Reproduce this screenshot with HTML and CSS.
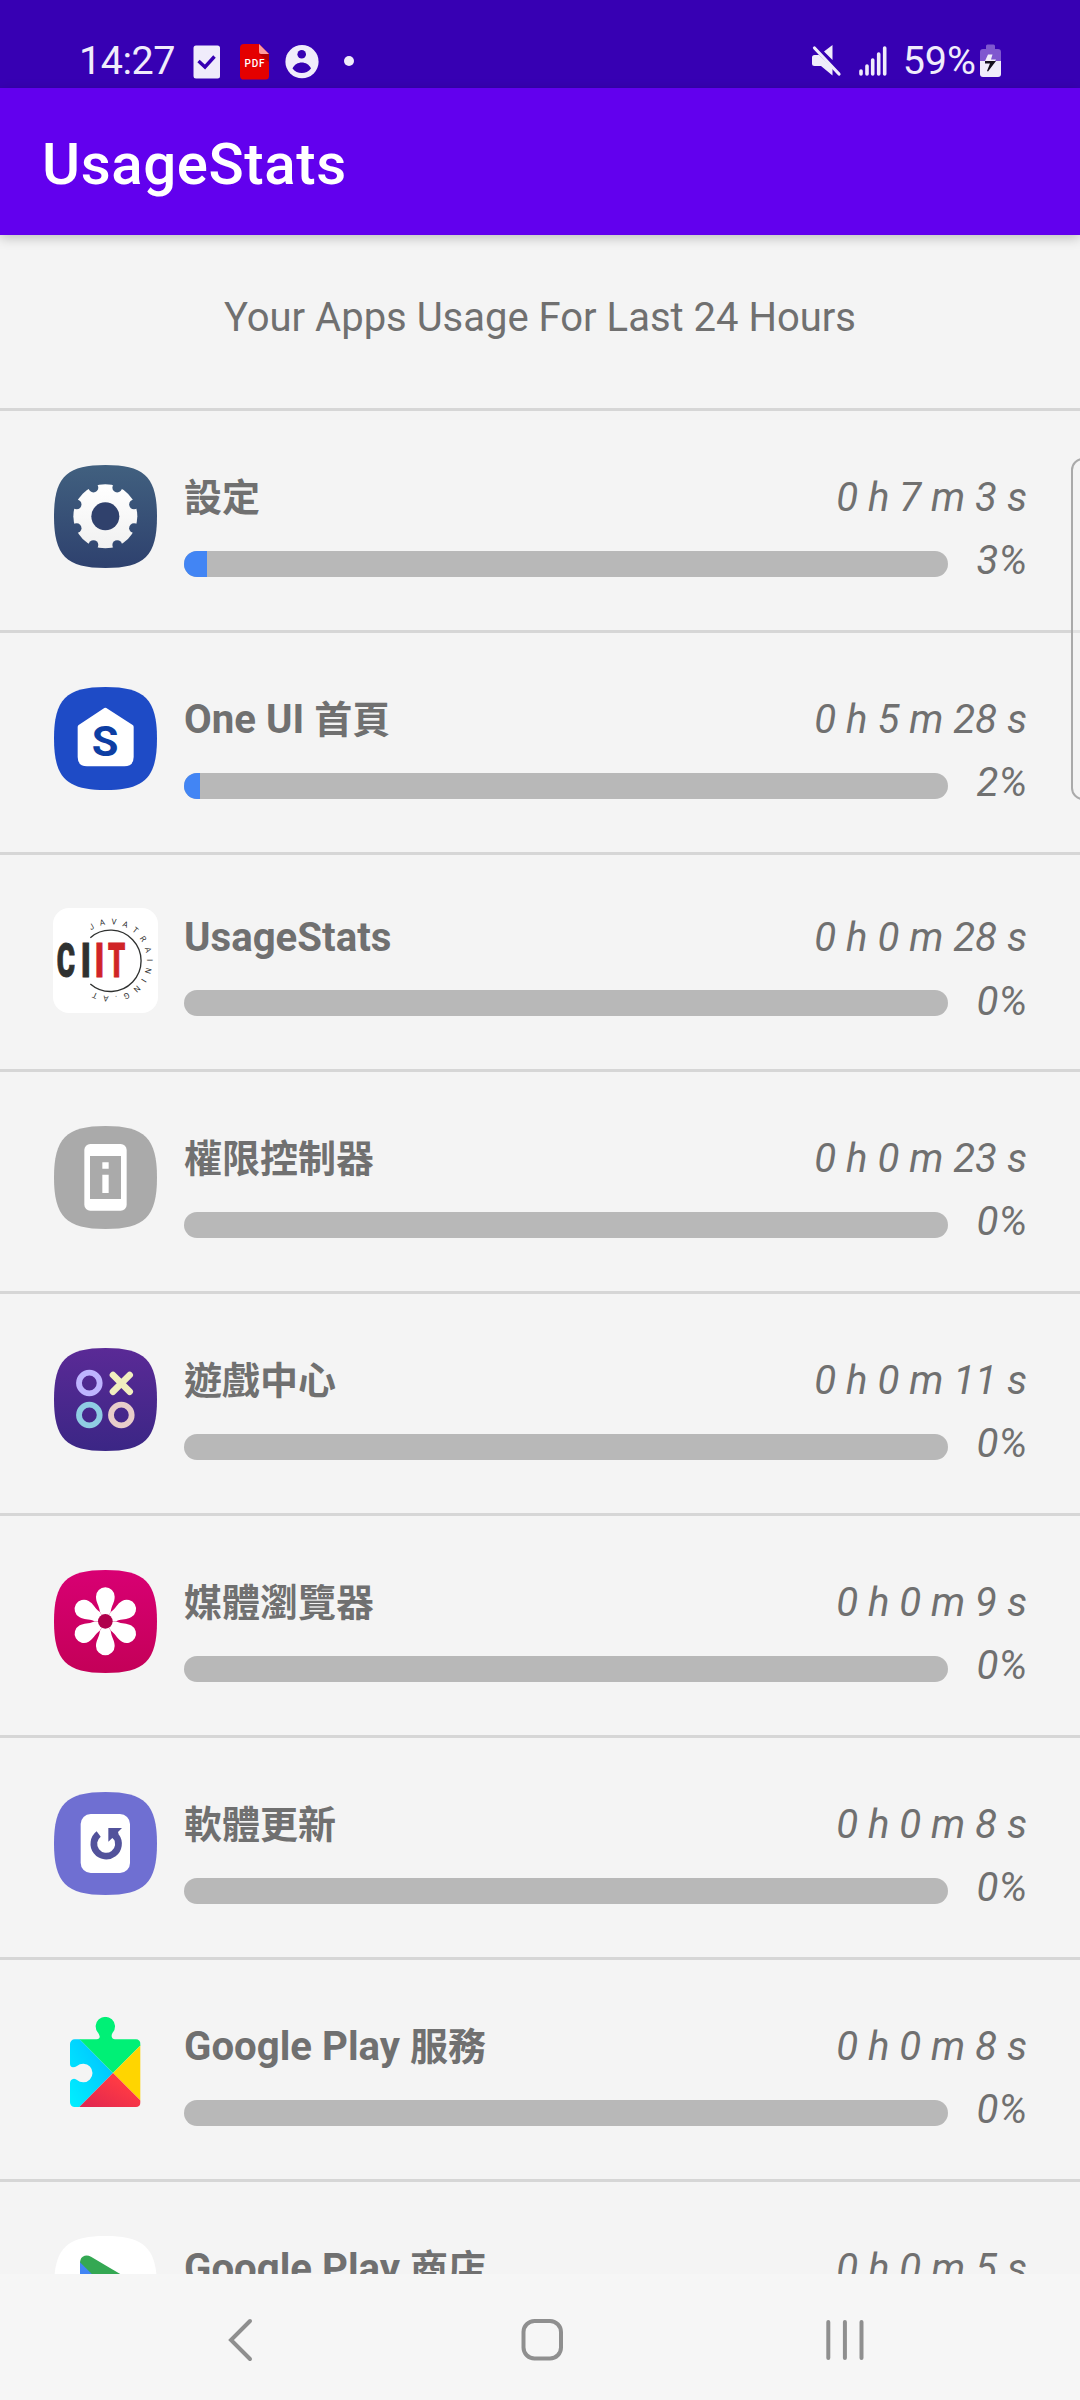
FILE: index.html
```html
<!DOCTYPE html>
<html lang="zh-Hant">
<head>
<meta charset="utf-8">
<title>UsageStats</title>
<link rel="stylesheet" href="styles.css">
</head>
<body>
<div class="screen">
  <header class="status">
    <span class="status-text clock">14:27</span>
    <svg class="status-check" width="28" height="34" viewBox="0 0 28 34"><rect x=".5" y=".5" width="26.5" height="33" rx="2.500" fill="#f0ecfb"/><path d="M5.500 16l6.500 6L21.500 11.500" fill="none" stroke="#3700b3" stroke-width="3.400"/></svg>
    <svg class="status-pdf" width="30" height="36" viewBox="0 0 30 36"><path d="M4 0H19L29 10V32a3.500 3.500 0 0 1-3.500 3.500H4A3.500 3.500 0 0 1 0 32V4A4 4 0 0 1 4 0Z" fill="#e40000"/><path d="M19 10h10v8z" fill="#b50000"/><path d="M19 0l10 10h-8a2 2 0 0 1-2-2z" fill="#ff9c9c"/><text x="14.500" y="23" text-anchor="middle" textLength="20" font-size="10" class="pdf-text">PDF</text></svg>
    <svg class="status-person" width="34" height="34" viewBox="0 0 34 34"><circle cx="17" cy="16.700" r="16.600" fill="#f0ecfb"/><circle cx="16.700" cy="9.300" r="4.300" fill="#3700b3"/><path d="M7.500 23.500C11 15.500 22.500 15.500 26 23.500C21.500 29.500 12 29.500 7.500 23.500Z" fill="#3700b3"/></svg>
    <span class="status-dot"></span>
    <svg class="status-mute" width="31" height="32" viewBox="0 0 31 32"><path d="M1 12.500Q1 10 3.500 10H8L21.500 23V30.500L10 21H3.500Q1 21 1 18.500ZM13 6.500L21.500 0V15Z" fill="#f0ecfb"/><path d="M3.500 3L28 29" stroke="#f0ecfb" stroke-width="3.200" stroke-linecap="round"/></svg>
    <svg class="status-signal" width="28" height="30" viewBox="0 0 28 30"><path d="M2 25v3M8 20v8M13.700 14v14M19.700 8v20M25.700 2v26" stroke="#f0ecfb" stroke-width="3.600" stroke-linecap="round"/></svg>
    <span class="status-text">59%</span>
    <svg class="status-battery" width="22" height="34" viewBox="0 0 22 34"><path d="M6 5V2Q6 .5 7.500 .5H13.500Q15 .5 15 2V5H18Q21 5 21 8V17H0V8Q0 5 3 5Z" fill="#7f57cf"/><path d="M0 17H21V30Q21 33 18 33H3Q0 33 0 30Z" fill="#f0ecfb"/><path d="M8 10.500H12.500L11 15.500H16L15 17H5Z" fill="#f0ecfb"/><path d="M5 17H16L8 27.500 7 27 10 19.500H5Z" fill="#15101f"/></svg>
  </header>
  <div class="appbar"><h1>UsageStats</h1></div>
  <main class="content">
    <h2 class="heading">Your Apps Usage For Last 24 Hours</h2>
    <ul class="apps">
      <li class="app">
        <svg class="icon" viewBox="0 0 315 315">
          <defs>
            <path id="squircle" d="M157.500 3C40 3 3 40 3 157.500S40 312 157.500 312S312 275 312 157.500S275 3 157.500 3Z"/>
            <linearGradient id="slate" x2="0" y2="1"><stop stop-color="#41607f"/><stop offset="1" stop-color="#2e416e"/></linearGradient>
            <linearGradient id="snow" x2="0" y2="1"><stop stop-color="#fff"/><stop offset="1" stop-color="#f1f1f1"/></linearGradient>
            <mask id="teeth"><rect width="315" height="315" fill="#fff"/><g transform="translate(157 157)"><g id="notches"><circle cx="35.600" cy="-86" r="14.500"/><circle cx="86" cy="-35.600" r="14.500"/><circle cx="86" cy="35.600" r="14.500"/><circle cx="35.600" cy="86" r="14.500"/></g><use href="#notches" transform="rotate(180)"/><circle r="42"/></g></mask>
          </defs>
          <use href="#squircle" fill="url(#slate)"/><circle cx="157" cy="157" r="44" fill="#30416c"/>
          <circle cx="157" cy="157" r="96" fill="url(#snow)" mask="url(#teeth)"/>
        </svg>
        <div class="info">
          <div class="line"><span class="name"><span class="han">設定</span></span><span class="time">0 h 7 m 3 s</span></div>
          <div class="line usage"><div class="bar"><div class="fill" style="width:3%"></div></div><span class="percent">3%</span></div>
        </div>
      </li>
      <li class="app">
        <svg class="icon" viewBox="0 0 315 315"><use href="#squircle" fill="#1e4bc6"/><path d="M154 66Q157 64 160 66L239 117Q242 119 242 123V213Q242 241 214 241H102Q74 241 74 213V123Q74 119 77 117Z" fill="#fff"/><text x="156" y="210" class="home-letter">S</text></svg>
        <div class="info">
          <div class="line"><span class="name">One UI <span class="han">首頁</span></span><span class="time">0 h 5 m 28 s</span></div>
          <div class="line usage"><div class="bar"><div class="fill" style="width:2.1%"></div></div><span class="percent">2%</span></div>
        </div>
      </li>
      <li class="app latin">
        <svg class="icon" viewBox="0 0 315 315"><rect width="315" height="315" rx="48" fill="#fff"/><path d="M112 89A92 92 0 1 1 112 228" fill="none" stroke="#2f3130" stroke-width="4"/>
          <g class="logo-text"><text transform="translate(11 208) scale(.58 1)">C</text><text transform="translate(83 208) scale(.70 1)">I</text><text class="red" transform="translate(125 208) scale(.65 1)">I</text><text class="red" transform="translate(165 208) scale(.57 1)">T</text></g>
          <path id="ring" d="M114 67A108 108 0 1 1 114 247" fill="none"/><text class="ring-text"><textPath href="#ring" textLength="455">JAVATRAINING.AT</textPath></text></svg>
        <div class="info">
          <div class="line"><span class="name">UsageStats</span><span class="time">0 h 0 m 28 s</span></div>
          <div class="line usage"><div class="bar"></div><span class="percent">0%</span></div>
        </div>
      </li>
      <li class="app">
        <svg class="icon" viewBox="0 0 315 315"><use href="#squircle" fill="#aaa"/><rect x="94" y="57" width="127" height="200" rx="18" fill="#fff"/><path d="M111 93H204V222H111Z" fill="#aaa"/><path d="M148 112h19v19h-19zM148 149h19v55h-19z" fill="#fff"/></svg>
        <div class="info">
          <div class="line"><span class="name"><span class="han">權限控制器</span></span><span class="time">0 h 0 m 23 s</span></div>
          <div class="line usage"><div class="bar"></div><span class="percent">0%</span></div>
        </div>
      </li>
      <li class="app">
        <svg class="icon" viewBox="0 0 315 315"><defs><linearGradient id="violet" x2="0" y2="1"><stop stop-color="#5a2a96"/><stop offset="1" stop-color="#3b2685"/></linearGradient></defs><use href="#squircle" fill="url(#violet)"/><g fill="none" stroke-width="17.500"><circle cx="109" cy="108" r="31" stroke="#beb4ff"/><circle cx="109" cy="204" r="31" stroke="#8fcde3"/><circle cx="205" cy="204" r="31" stroke="#e8cdca"/><path d="M180 84L230 134M230 84L180 134" stroke="#f1efbf" stroke-width="20" stroke-linecap="round"/></g></svg>
        <div class="info">
          <div class="line"><span class="name"><span class="han">遊戲中心</span></span><span class="time">0 h 0 m 11 s</span></div>
          <div class="line usage"><div class="bar"></div><span class="percent">0%</span></div>
        </div>
      </li>
      <li class="app">
        <svg class="icon" viewBox="0 0 315 315"><defs><linearGradient id="pink" x2="0" y2="1"><stop stop-color="#d80073"/><stop offset="1" stop-color="#c40058"/></linearGradient><path id="petal" d="M0 0L-16-28C-19-50-28-56-28-74A28 28 0 0 1 28-74C28-56 19-50 16-28Z"/></defs><use href="#squircle" fill="url(#pink)"/><g transform="translate(157 157)" fill="#fff"><use href="#petal"/><use href="#petal" transform="rotate(60)"/><use href="#petal" transform="rotate(120)"/><use href="#petal" transform="rotate(180)"/><use href="#petal" transform="rotate(240)"/><use href="#petal" transform="rotate(300)"/><circle r="22" fill="#b0004c"/></g></svg>
        <div class="info">
          <div class="line"><span class="name"><span class="han">媒體瀏覽器</span></span><span class="time">0 h 0 m 9 s</span></div>
          <div class="line usage"><div class="bar"></div><span class="percent">0%</span></div>
        </div>
      </li>
      <li class="app">
        <svg class="icon" viewBox="0 0 315 315"><use href="#squircle" fill="#6f6fd2"/><rect x="83" y="69" width="148" height="177" rx="30" fill="#fff"/><path d="M137 129A37 37 0 1 0 189 136" fill="none" stroke="#52529b" stroke-width="20"/><path d="M166 111H207L195 123 197 130 184 147 178 141 166 152Z" fill="#52529b"/></svg>
        <div class="info">
          <div class="line"><span class="name"><span class="han">軟體更新</span></span><span class="time">0 h 0 m 8 s</span></div>
          <div class="line usage"><div class="bar"></div><span class="percent">0%</span></div>
        </div>
      </li>
      <li class="app">
        <svg class="icon" viewBox="0 0 315 315"><defs><clipPath id="puzzle"><path d="M65 79H131Q141 79 140 70Q139 64 134 58A29 29 0 1 1 180 58Q175 64 176 70Q177 79 186 79H249A14 14 0 0 1 263 93V268A14 14 0 0 1 249 282H65A14 14 0 0 1 51 268V210Q52 198 63 197Q69 198 72 201A28 28 0 1 0 72 159Q66 163 60 163Q51 162 51 152V93A14 14 0 0 1 65 79Z"/></clipPath><linearGradient id="sky" x1="1" y1="0" x2="0" y2="1"><stop stop-color="#00b8ff"/><stop offset="1" stop-color="#00f0ff"/></linearGradient><linearGradient id="ruby" x1="1" y1="0" x2="0" y2="1"><stop offset=".3" stop-color="#ff3a44"/><stop offset="1" stop-color="#de2550"/></linearGradient></defs><g clip-path="url(#puzzle)"><path d="M51 50L80 79 180 180 79 282H51Z" fill="url(#sky)"/><path d="M80 79V0H263V97L180 180Z" fill="#00f076"/><path d="M263 97V263L180 180Z" fill="#ffd500"/><path d="M180 180L263 263V282H79Z" fill="url(#ruby)"/></g></svg>
        <div class="info">
          <div class="line"><span class="name">Google Play <span class="han">服務</span></span><span class="time">0 h 0 m 8 s</span></div>
          <div class="line usage"><div class="bar"></div><span class="percent">0%</span></div>
        </div>
      </li>
      <li class="app">
        <svg class="icon" viewBox="0 0 315 315"><use href="#squircle" fill="#fff"/><path d="M81 79L160 157 81 236Z" fill="#4285f4"/><path d="M81 82Q82 66 95 62Q105 60 114 65L215 125 160 160Z" fill="#34a853"/><path d="M215 125L250 147Q262 157 250 168L215 190 160 157Z" fill="#fbbc04"/><path d="M81 236L160 157 215 190 114 249Q86 262 81 236Z" fill="#ea4335"/></svg>
        <div class="info">
          <div class="line"><span class="name">Google Play <span class="han">商店</span></span><span class="time">0 h 0 m 5 s</span></div>
          <div class="line usage"><div class="bar"></div><span class="percent">0%</span></div>
        </div>
      </li>
    </ul>
  </main>
  <nav class="navbar">
    <svg width="360" height="126" viewBox="0 0 360 126"><path d="M250 47L231 66 250 85" fill="none" stroke="#8f8f8f" stroke-width="4" stroke-linecap="round"/></svg>
    <svg width="360" height="126" viewBox="360 0 360 126"><rect x="523.500" y="47" width="37.500" height="37.500" rx="11" fill="none" stroke="#8f8f8f" stroke-width="4"/></svg>
    <svg width="360" height="126" viewBox="720 0 360 126"><path d="M828.300 48v36M844.900 48v36M861.500 48v36" stroke="#8f8f8f" stroke-width="4" stroke-linecap="round"/></svg>
  </nav>
  <div class="edge-handle"></div>
</div>
</body>
</html>
```
FILE: styles.css
```css
* { box-sizing: border-box; }
body { margin: 0; font-family: Roboto, "Noto Sans CJK TC", sans-serif; color: #707070; background: #f4f4f4; }
.screen { position: relative; display: flex; flex-direction: column; width: 1080px; height: 2400px; overflow: hidden; }

.status { display: flex; align-items: flex-start; flex: none; height: 88px; padding: 44px 78px 0 78px; background: #3700b3; }
.status-text { font-size: 39.5px; line-height: 34px; color: #f0ecfb; }
.clock { width: 115px; padding-left: 1px; letter-spacing: -.5px; }
.status-check { margin-top: 1px; }
.status-pdf { margin-left: 19px; }
.status-person { margin: 1px 0 0 15px; }
.status-dot { width: 10px; height: 10px; margin: 12px 0 0 25px; border-radius: 50%; background: #f0ecfb; }
.status-mute { margin: 1px 0 0 auto; }
.status-signal { margin: 2px 16px 0 17px; }
.status-battery { margin-left: 4px; }
.pdf-text { font-weight: 500; fill: #fff; }

.appbar { position: relative; z-index: 1; display: flex; align-items: center; flex: none; height: 147px; padding: 5px 42px 0; background: #6200ee; box-shadow: 0 3px 11px rgba(0, 0, 0, .22); }
.appbar h1 { margin: 0; font-size: 58.2px; font-weight: 500; letter-spacing: .6px; color: #fff; }

.content { flex: 1; min-height: 0; overflow: hidden; }
.heading { height: 173px; margin: 0; padding-top: 59px; font-size: 40px; font-weight: 400; line-height: 47px; text-align: center; }
.apps { margin: 0; padding: 0; list-style: none; }
.app { display: flex; gap: 26px; height: 222px; padding: 53px; border-top: 3px solid #d6d6d6; }
.icon { flex: none; width: 105px; height: 105px; }
.info { flex: 1; }
.line { display: flex; justify-content: space-between; align-items: flex-start; height: 87px; font-size: 40.2px; line-height: 68px; white-space: nowrap; }
.name { font-weight: 700; }
.han { font-size: 38px; line-height: 0; }
.time, .percent { font-style: italic; }
.usage { height: 26px; line-height: 20px; }
.bar { width: 764px; height: 26px; border-radius: 13px; background: #b8b8b8; overflow: hidden; }
.fill { height: 100%; background: #4285f4; }
.latin { height: 217px; }
.latin .line { height: 82px; line-height: 60px; }
.latin .usage { height: 26px; line-height: 23px; }

.home-letter { font-size: 130px; font-weight: 700; text-anchor: middle; fill: #0d3ea3; }
.logo-text { font-size: 144px; font-weight: 900; fill: #2f3130; stroke: #2f3130; stroke-width: 3px; }
.logo-text .red { fill: #d02427; stroke: #d02427; }
.ring-text { font-size: 24px; fill: #2f3130; }

.navbar { display: flex; flex: none; height: 126px; background: #f6f6f6; }
.edge-handle { position: absolute; top: 458px; right: -30px; width: 39px; height: 342px; border: 2px solid #aaa; border-radius: 12px; background: rgba(246, 246, 246, .4); }
```
